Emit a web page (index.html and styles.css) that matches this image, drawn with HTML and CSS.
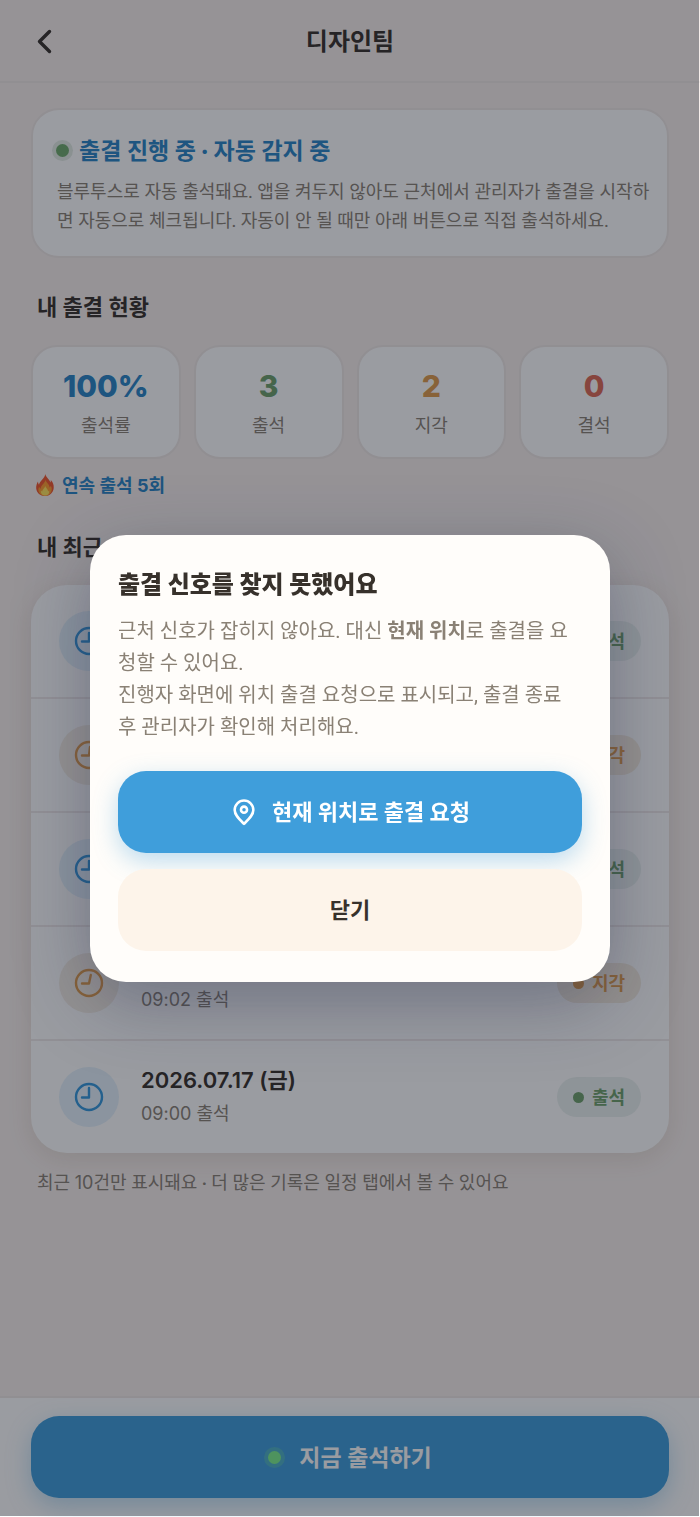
FILE: index.html
```html
<!DOCTYPE html>
<html lang="ko">
<head>
<meta charset="utf-8">
<meta name="viewport" content="width=device-width, initial-scale=1">
<title>디자인팀</title>
<link rel="stylesheet" href="styles.css">
</head>
<body>
<div class="page">
  <header class="topbar">
    <button class="back" type="button" aria-label="뒤로">
      <svg width="28" height="28" viewBox="0 0 28 28" fill="none" stroke="currentColor" stroke-width="3.400" stroke-linecap="round" stroke-linejoin="round"><path d="M19.500 4.500 9.500 14.500l10 10"/></svg>
    </button>
    <h1 class="topbar-title">디자인팀</h1>
  </header>

  <main class="content">
    <section class="notice">
      <h2 class="notice-title"><span class="live-dot"></span>출결 진행 중 · 자동 감지 중</h2>
      <p class="notice-text">블루투스로 자동 출석돼요. 앱을 켜두지 않아도 근처에서 관리자가 출결을 시작하면 자동으로 체크됩니다. 자동이 안 될 때만 아래 버튼으로 직접 출석하세요.</p>
    </section>

    <h2 class="heading">내 출결 현황</h2>
    <div class="stats">
      <div class="stat"><strong class="stat-value blue">100%</strong><span class="stat-label">출석률</span></div>
      <div class="stat"><strong class="stat-value green">3</strong><span class="stat-label">출석</span></div>
      <div class="stat"><strong class="stat-value orange">2</strong><span class="stat-label">지각</span></div>
      <div class="stat"><strong class="stat-value red">0</strong><span class="stat-label">결석</span></div>
    </div>
    <p class="streak">
      <svg class="flame" width="18" height="22" viewBox="0 0 18 22"><path fill="#f2562c" d="M9.300 0c.5 3.200 4.300 5 5 8.600.5-.7.7-1.500.5-2.500C17 8.500 18 11.200 17.700 14c-.4 4.700-4 8-8.700 8S.6 18.900.2 14.500C0 11.700.8 9.200 2 7.400c0 1.400.3 2.500 1 3.300C3.800 6.500 8.900 4.500 9.300 0z"/><path fill="#ff9d2e" d="M9.600 5.500c0 3 3.900 4.300 4 8 .6-.4 1-1 1.100-1.800 1.200 1.700 1.400 3.600.6 5.700-1 2.700-3.300 4.400-6.300 4.400-3.200 0-5.800-1.900-6.500-4.800-.3-1.500 0-3 .7-4.300.3 1 .8 1.600 1.500 2C4.800 11 9 9.500 9.600 5.500z"/><path fill="#ffe45c" d="M9.300 12c.2 2 2.800 3 2.800 5.400.5-.2.800-.5 1-1 .5 3-1.200 5.100-4 5.100-2.900 0-4.700-2.200-4.100-5 .3.600.7 1 1.200 1.100C6.300 15 8.800 14.400 9.300 12z"/></svg>
      <span>연속 출석 <span class="num">5</span>회</span>
    </p>

    <h2 class="heading">내 최근 기록</h2>
    <ul class="records">
      <li class="record">
        <span class="clock clock-blue"><svg width="30" height="30" viewBox="0 0 30 30"><circle cx="15" cy="15" r="13"/><path d="M15 7v8.500H8"/></svg></span>
        <div class="record-text"><strong class="record-date">2026.07.21 (화)</strong><span class="record-time">09:00 출석</span></div>
        <span class="badge badge-green">출석</span>
      </li>
      <li class="record">
        <span class="clock clock-orange"><svg width="30" height="30" viewBox="0 0 30 30"><circle cx="15" cy="15" r="13"/><path d="M16 7l-1 8.500H8"/></svg></span>
        <div class="record-text"><strong class="record-date">2026.07.20 (월)</strong><span class="record-time">09:02 출석</span></div>
        <span class="badge badge-orange">지각</span>
      </li>
      <li class="record">
        <span class="clock clock-blue"><svg width="30" height="30" viewBox="0 0 30 30"><circle cx="15" cy="15" r="13"/><path d="M15 7v8.500H8"/></svg></span>
        <div class="record-text"><strong class="record-date">2026.07.19 (일)</strong><span class="record-time">09:00 출석</span></div>
        <span class="badge badge-green">출석</span>
      </li>
      <li class="record">
        <span class="clock clock-orange"><svg width="30" height="30" viewBox="0 0 30 30"><circle cx="15" cy="15" r="13"/><path d="M16.800 7 15 15.500H8"/></svg></span>
        <div class="record-text"><strong class="record-date">2026.07.18 (토)</strong><span class="record-time">09:02 출석</span></div>
        <span class="badge badge-orange">지각</span>
      </li>
      <li class="record">
        <span class="clock clock-blue"><svg width="30" height="30" viewBox="0 0 30 30"><circle cx="15" cy="15" r="13"/><path d="M15 6v9.500H8"/></svg></span>
        <div class="record-text"><strong class="record-date">2026.07.17 (금)</strong><span class="record-time">09:00 출석</span></div>
        <span class="badge badge-green">출석</span>
      </li>
    </ul>
    <p class="footnote">최근 <span class="num">10</span>건만 표시돼요 · 더 많은 기록은 일정 탭에서 볼 수 있어요</p>
  </main>

  <footer class="bottombar">
    <button class="button button-primary button-checkin" type="button"><span class="ready-dot"></span>지금 출석하기</button>
  </footer>
</div>

<div class="backdrop"></div>
<div class="modal-layer">
  <div class="modal" role="dialog" aria-modal="true" aria-labelledby="modal-title">
    <h2 class="modal-title" id="modal-title">출결 신호를 찾지 못했어요</h2>
    <p class="modal-text">근처 신호가 잡히지 않아요. 대신 <b>현재 위치</b>로 출결을 요청할 수 있어요.<br>진행자 화면에 위치 출결 요청으로 표시되고, 출결 종료 후 관리자가 확인해 처리해요.</p>
    <div class="modal-actions">
      <button class="button button-primary" type="button">
        <svg width="28" height="28" viewBox="0 0 24 24" fill="none" stroke="currentColor" stroke-width="2.200" stroke-linejoin="round"><path d="M20 10.200c0 4.300-3.700 7.700-8 12-4.300-4.300-8-7.700-8-12a8 8 0 0 1 16 0z"/><circle cx="12" cy="10" r="2.600"/></svg>
        현재 위치로 출결 요청
      </button>
      <button class="button button-plain" type="button">닫기</button>
    </div>
  </div>
</div>
</body>
</html>
```

FILE: styles.css
```css
* {
  box-sizing: border-box;
}

body {
  margin: 0;
  background: #f8f0ed;
  color: #37312b;
  font-family: Lato, "Noto Sans CJK KR", sans-serif;
  font-size: 18px;
}

h1, h2, p, ul {
  margin: 0;
  padding: 0;
}

button {
  border: 0;
  font: inherit;
  color: inherit;
}

svg {
  display: block;
  flex: none;
}

.num,
.stat-value,
.record-date,
.record-time {
  font-family: Inter, "Noto Sans CJK KR", sans-serif;
}

.num {
  line-height: 1;
}

.page {
  display: flex;
  flex-direction: column;
  min-height: 100vh;
}

.topbar {
  display: grid;
  grid-template-columns: 30px 1fr 30px;
  align-items: center;
  height: 83px;
  padding: 0 30px;
  border-bottom: 2px solid #f0e8e6;
}

.back {
  padding: 0;
  background: none;
}

.topbar-title {
  font-size: 24px;
  line-height: 34px;
  text-align: center;
}

.content {
  padding: 25px 31px;
}

.notice {
  padding: 25px 14px 21px 20px;
  border: 2px solid #f0e8e6;
  border-radius: 28px;
  background: #fff;
}

.notice-title {
  display: flex;
  align-items: center;
  gap: 10px;
  color: #2a85c6;
  font-size: 23px;
  line-height: 30px;
}

.live-dot {
  width: 13px;
  height: 13px;
  margin-left: 3px;
  border-radius: 50%;
  background: #6fab6b;
  box-shadow: 0 0 0 4px #e4ece4;
}

.notice-text {
  margin-top: 12px;
  padding-left: 4px;
  color: #8a8175;
  line-height: 29px;
}

.heading {
  margin: 34px 6px 23px;
  font-size: 22px;
  line-height: 30px;
}

.stats {
  display: grid;
  grid-template-columns: repeat(4, 1fr);
  gap: 13px;
}

.stat {
  display: flex;
  flex-direction: column;
  align-items: center;
  gap: 8px;
  padding: 21px 8px 19px;
  border: 2px solid #f0e8e6;
  border-radius: 26px;
  background: #fff;
}

.stat-value {
  font-size: 30px;
  font-weight: 800;
  line-height: 36px;
}

.stat-label {
  color: #8a8175;
  line-height: 26px;
}

.blue { color: #2a85c6; }
.green { color: #6fa06c; }
.orange { color: #e09c4c; }
.red { color: #df6a55; }

.streak {
  display: flex;
  align-items: center;
  gap: 8px;
  margin: 13px 5px 0;
  color: #2a85c6;
  font-weight: 700;
  line-height: 26px;
}

.records {
  list-style: none;
  border-radius: 36px;
  background: #fff;
  box-shadow: 0 6px 24px rgba(120, 90, 60, 0.14);
}

.record {
  display: flex;
  align-items: center;
  gap: 22px;
  padding: 22px 28px;
}

.record + .record {
  border-top: 2px solid #f0eaea;
}

.clock {
  display: grid;
  place-items: center;
  width: 60px;
  height: 60px;
  border-radius: 50%;
}

.clock svg {
  fill: none;
  stroke: currentColor;
  stroke-width: 2.400;
  stroke-linecap: round;
  stroke-linejoin: round;
}

.clock-blue {
  background: #e5f2fc;
  color: #3498dc;
}

.clock-orange {
  background: #f5eee5;
  color: #e09c4c;
}

.record-text {
  display: flex;
  flex: 1;
  flex-direction: column;
}

.record-date {
  font-size: 22px;
  font-weight: 600;
  line-height: 34px;
}

.record-time {
  color: #8a8175;
  line-height: 34px;
}

.badge {
  display: flex;
  align-items: center;
  gap: 8px;
  padding: 7px 16px;
  border-radius: 20px;
  font-weight: 700;
  line-height: 26px;
}

.badge::before {
  width: 11px;
  height: 11px;
  border-radius: 50%;
  background: currentColor;
  content: "";
}

.badge-green {
  background: #ebf2f0;
  color: #6fa06c;
}

.badge-orange {
  background: #f5ecdf;
  color: #e09c4c;
}

.footnote {
  margin: 16px 6px 0;
  color: #8a8175;
  line-height: 26px;
}

.bottombar {
  margin-top: auto;
  padding: 18px 31px 19px;
  border-top: 2px solid #f0e8e6;
  background: #fff;
}

.button {
  display: flex;
  align-items: center;
  justify-content: center;
  gap: 14px;
  width: 100%;
  height: 82px;
  border-radius: 28px;
  font-size: 22px;
  font-weight: 700;
  line-height: 28px;
}

.button-primary {
  background: #3f9edb;
  box-shadow: 0 8px 24px rgba(63, 158, 219, 0.35);
  color: #fff;
}

.button-checkin {
  gap: 18px;
  font-size: 23px;
}

.ready-dot {
  width: 13px;
  height: 13px;
  border-radius: 50%;
  background: #7df08c;
  box-shadow: 0 0 0 4px rgba(125, 240, 140, 0.25);
}

.button-plain {
  position: relative;
  background: #fdf4ea;
}

.backdrop {
  position: fixed;
  inset: 0 1px 1px 0;
  background: rgba(15, 18, 30, 0.42);
}

.modal-layer {
  position: fixed;
  inset: 0;
  display: grid;
  place-items: center;
  padding: 24px;
}

.modal {
  width: 100%;
  max-width: 520px;
  padding: 31px 28px;
  border-radius: 36px;
  background: #fffdfa;
  box-shadow: 0 20px 72px rgba(40, 46, 76, 0.38);
}

.modal-title {
  font-size: 24px;
  font-weight: 800;
  line-height: 36px;
}

.modal-text {
  margin-top: 13px;
  padding-right: 4px;
  color: #8a8175;
  font-family: Roboto, "Noto Sans CJK KR", sans-serif;
  font-size: 20px;
  line-height: 32px;
}

.modal-actions {
  display: flex;
  flex-direction: column;
  gap: 16px;
  margin-top: 28px;
}
```
